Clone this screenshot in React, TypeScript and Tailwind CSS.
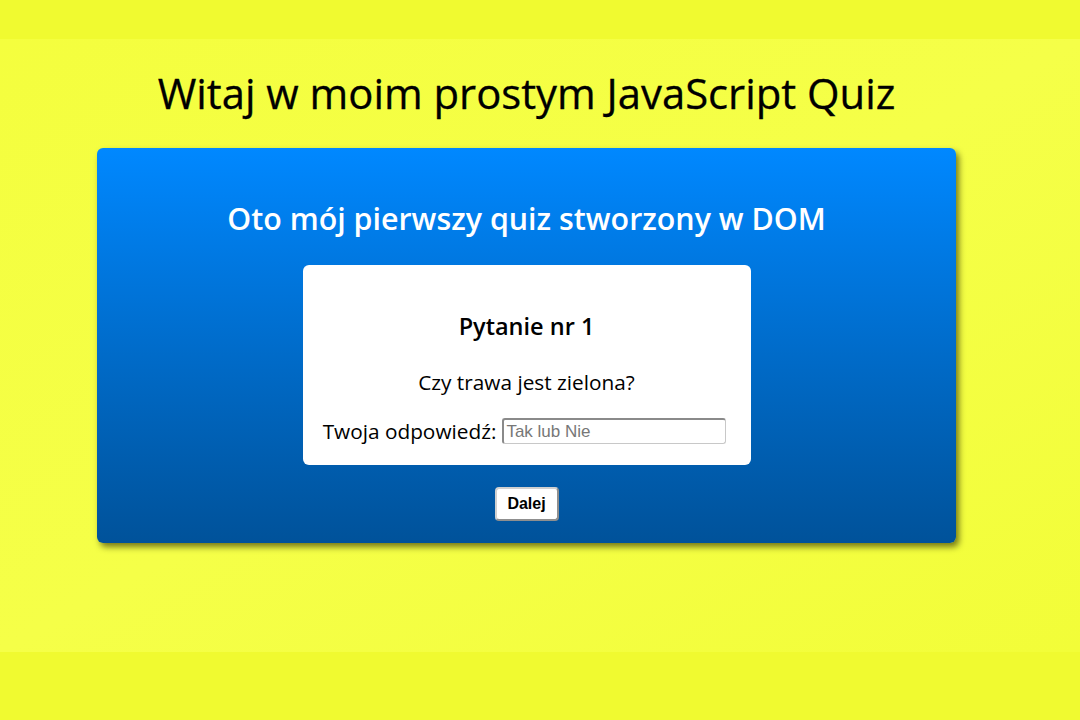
const App = () => {
  return (
    <div className="w-[1080px] h-[720px] flex flex-col bg-[#f0fa30] font-['Open_Sans',sans-serif] overflow-hidden">
      <div className="h-[39px] shrink-0 bg-[#f0fa30]" />
      <div className="h-[613px] shrink-0 bg-gradient-to-br from-[#f4fe3e] via-[#f5ff48] to-[#f2fd38] flex flex-col items-center pr-[27px]">
        <h1 className="mt-[29px] text-[41.8px] leading-[50px] text-black [-webkit-text-stroke:0.3px_black]">
          Witaj w moim prostym JavaScript Quiz
        </h1>
        <div className="mt-[30px] w-[859px] h-[395px] rounded-[6px] bg-gradient-to-b from-[#0088ff] to-[#00529a] shadow-[3px_4px_6px_rgba(50,50,0,0.65)] flex flex-col items-center">
          <h2 className="mt-[51px] text-[30.4px] leading-[40px] font-semibold text-white">
            Oto mój pierwszy quiz stworzony w DOM
          </h2>
          <div className="mt-[26px] w-[448px] h-[200px] rounded-[6px] bg-white flex flex-col items-center">
            <p className="mt-[45px] text-[23.5px] leading-[32px] font-semibold text-black">
              Pytanie nr 1
            </p>
            <p className="mt-[26px] text-[20.8px] leading-[28px] text-black">
              Czy trawa jest zielona?
            </p>
            <div className="mt-[21px] flex items-center gap-[6px] pr-[4px]">
              <label className="text-[20.8px] leading-[28px] text-black">
                Twoja odpowiedź:
              </label>
              <input
                type="text"
                placeholder="Tak lub Nie"
                className="w-[224px] h-[26px] rounded-[3px] border border-[#c8c8c8] border-t-[2px] border-t-[#8a8a8a] border-l-[2px] border-l-[#8a8a8a] px-[2px] text-[17px] font-['Liberation_Sans',sans-serif] placeholder:text-[#777] outline-none"
              />
            </div>
          </div>
          <button className="mt-[22px] w-[64px] h-[34px] rounded-[4px] bg-white border-2 border-[#8f8f8f] border-t-[#d0d0d0] border-l-[#d0d0d0] text-[16px] font-bold font-['Liberation_Sans',sans-serif] text-black">
            Dalej
          </button>
        </div>
      </div>
      <div className="h-[68px] shrink-0 bg-[#f0fa30]" />
    </div>
  );
};

export default App;
